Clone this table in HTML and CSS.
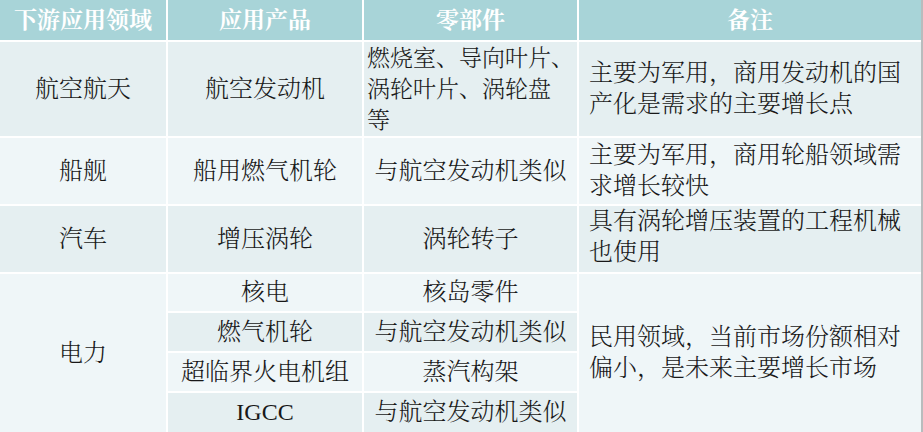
FILE: index.html
```html
<!DOCTYPE html>
<html lang="zh">
<head>
<meta charset="utf-8">
<link rel="stylesheet" href="styles.css">
</head>
<body>
<div class="table">
  <div class="cell head">下游应用领域</div>
  <div class="cell head">应用产品</div>
  <div class="cell head">零部件</div>
  <div class="cell head">备注</div>

  <div class="cell dark">航空航天</div>
  <div class="cell dark">航空发动机</div>
  <div class="cell dark left parts">燃烧室、导向叶片、<br>涡轮叶片、涡轮盘<br>等</div>
  <div class="cell dark note">主要为军用，商用发动机的国<br>产化是需求的主要增长点</div>

  <div class="cell light">船舰</div>
  <div class="cell light">船用燃气机轮</div>
  <div class="cell light">与航空发动机类似</div>
  <div class="cell light note">主要为军用，商用轮船领域需<br>求增长较快</div>

  <div class="cell dark">汽车</div>
  <div class="cell dark">增压涡轮</div>
  <div class="cell dark">涡轮转子</div>
  <div class="cell dark note up">具有涡轮增压装置的工程机械<br>也使用</div>

  <div class="cell light span4">电力</div>
  <div class="cell light">核电</div>
  <div class="cell light">核岛零件</div>
  <div class="cell light note span4 power">民用领域，当前市场份额相对<br>偏小，是未来主要增长市场</div>
  <div class="cell dark">燃气机轮</div>
  <div class="cell dark">与航空发动机类似</div>
  <div class="cell light">超临界火电机组</div>
  <div class="cell light">蒸汽构架</div>
  <div class="cell dark">IGCC</div>
  <div class="cell dark">与航空发动机类似</div>
</div>
</body>
</html>
```

FILE: styles.css
```css
html, body {
  margin: 0;
  padding: 0;
  background: #ffffff;
}

body {
  width: 923px;
  height: 432px;
  overflow: hidden;
  font-family: "Liberation Serif", "Noto Serif CJK SC", "Noto Sans CJK SC", serif;
  color: #181818;
}

.table {
  display: grid;
  width: 921px;
  grid-template-columns: 166px 194px 213px 1fr;
  grid-template-rows: 40px 94px 66px 66px 37px 38px 38px 39px;
  gap: 2px;
  background: #ffffff;
  border-right: 2px solid #b9bcbd;
}

.cell {
  display: flex;
  align-items: center;
  justify-content: center;
  text-align: center;
  font-size: 24px;
  line-height: 31px;
  font-weight: 300;
}

.head {
  background: #a8d4d8;
  color: #ffffff;
  font-weight: 700;
  font-size: 23px;
}

.dark {
  background: #e5eff1;
}

.light {
  background: #eff6f8;
}

.left {
  justify-content: flex-start;
  text-align: left;
}

.parts {
  padding-left: 3px;
  font-size: 23px;
  white-space: nowrap;
}

.note {
  justify-content: flex-start;
  text-align: left;
  padding-left: 10px;
}

.up {
  align-items: flex-start;
  padding-top: 0;
}

.span4 {
  grid-row: span 4;
}

.power {
  grid-column: 4;
  grid-row: 5 / span 4;
}
```
